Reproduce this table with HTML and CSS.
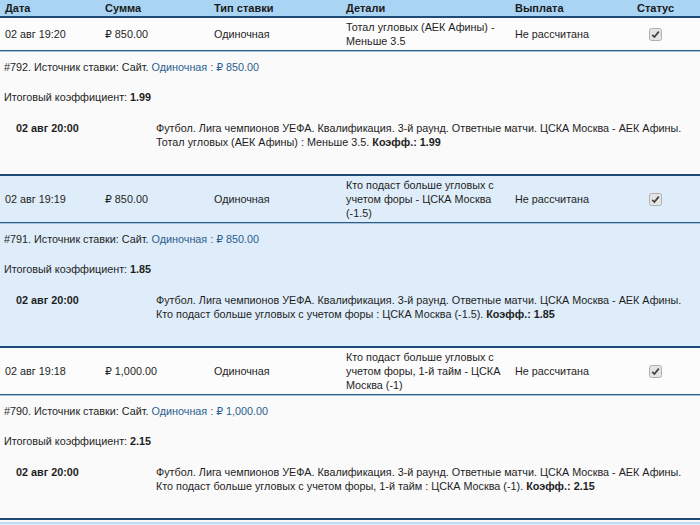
FILE: index.html
```html
<!DOCTYPE html>
<html lang="ru">
<head>
<meta charset="utf-8">
<title>Ставки</title>
<link rel="stylesheet" href="styles.css">
</head>
<body>
<div class="table">
  <div class="head">
    <div>Дата</div><div>Сумма</div><div>Тип ставки</div><div>Детали</div><div>Выплата</div><div>Статус</div>
  </div>

  <div class="bet">
    <div class="row">
      <div>02 авг 19:20</div>
      <div>₽ 850.00</div>
      <div>Одиночная</div>
      <div class="det">Тотал угловых (АЕК Афины) - Меньше 3.5</div>
      <div>Не рассчитана</div>
      <div class="st"><svg class="cb" width="13" height="13" viewBox="0 0 13 13"><rect x="0.5" y="0.5" width="12" height="12" rx="2" fill="#e4e4e4" stroke="#b0b0b0"/><path d="M3.2 6.8 L5.4 9 L9.8 3.6" fill="none" stroke="#404040" stroke-width="1.7"/></svg></div>
    </div>
    <div class="details">
      <p class="src">#792. Источник ставки: Сайт. <span class="link">Одиночная : ₽ 850.00</span></p>
      <p class="total">Итоговый коэффициент: <b>1.99</b></p>
      <div class="event">
        <div class="edate">02 авг 20:00</div>
        <div class="etext">Футбол. Лига чемпионов УЕФА. Квалификация. 3-й раунд. Ответные матчи. ЦСКА Москва - АЕК Афины.<br>Тотал угловых (АЕК Афины) : Меньше 3.5. <b>Коэфф.: 1.99</b></div>
      </div>
    </div>
  </div>

  <div class="bet alt">
    <div class="row">
      <div>02 авг 19:19</div>
      <div>₽ 850.00</div>
      <div>Одиночная</div>
      <div class="det">Кто подаст больше угловых с учетом форы - ЦСКА Москва (-1.5)</div>
      <div>Не рассчитана</div>
      <div class="st"><svg class="cb" width="13" height="13" viewBox="0 0 13 13"><rect x="0.5" y="0.5" width="12" height="12" rx="2" fill="#e4e4e4" stroke="#b0b0b0"/><path d="M3.2 6.8 L5.4 9 L9.8 3.6" fill="none" stroke="#404040" stroke-width="1.7"/></svg></div>
    </div>
    <div class="details">
      <p class="src">#791. Источник ставки: Сайт. <span class="link">Одиночная : ₽ 850.00</span></p>
      <p class="total">Итоговый коэффициент: <b>1.85</b></p>
      <div class="event">
        <div class="edate">02 авг 20:00</div>
        <div class="etext">Футбол. Лига чемпионов УЕФА. Квалификация. 3-й раунд. Ответные матчи. ЦСКА Москва - АЕК Афины.<br>Кто подаст больше угловых с учетом форы : ЦСКА Москва (-1.5). <b>Коэфф.: 1.85</b></div>
      </div>
    </div>
  </div>

  <div class="bet">
    <div class="row">
      <div>02 авг 19:18</div>
      <div>₽ 1,000.00</div>
      <div>Одиночная</div>
      <div class="det">Кто подаст больше угловых с учетом форы, 1-й тайм - ЦСКА Москва (-1)</div>
      <div>Не рассчитана</div>
      <div class="st"><svg class="cb" width="13" height="13" viewBox="0 0 13 13"><rect x="0.5" y="0.5" width="12" height="12" rx="2" fill="#e4e4e4" stroke="#b0b0b0"/><path d="M3.2 6.8 L5.4 9 L9.8 3.6" fill="none" stroke="#404040" stroke-width="1.7"/></svg></div>
    </div>
    <div class="details">
      <p class="src">#790. Источник ставки: Сайт. <span class="link">Одиночная : ₽ 1,000.00</span></p>
      <p class="total">Итоговый коэффициент: <b>2.15</b></p>
      <div class="event">
        <div class="edate">02 авг 20:00</div>
        <div class="etext">Футбол. Лига чемпионов УЕФА. Квалификация. 3-й раунд. Ответные матчи. ЦСКА Москва - АЕК Афины.<br>Кто подаст больше угловых с учетом форы, 1-й тайм : ЦСКА Москва (-1). <b>Коэфф.: 2.15</b></div>
      </div>
    </div>
  </div>

  <div class="bet alt">
    <div class="row next"></div>
  </div>
</div>
</body>
</html>
```

FILE: styles.css
```css
html, body {
  margin: 0;
  padding: 0;
  background: #fafafa;
}
body {
  font-family: "Liberation Sans", Arial, "DejaVu Sans", sans-serif;
  font-size: 10.8px;
  line-height: 14px;
  color: #1e1e1e;
}
.table {
  width: 700px;
  overflow: hidden;
}
.head, .row {
  display: grid;
  grid-template-columns: 100px 109px 132px 169px 122px 1fr;
  padding-left: 5px;
  align-items: center;
}
.head {
  background: #a9d4f4;
  font-weight: bold;
  font-size: 11px;
  padding-top: 1px;
  padding-bottom: 1px;
  border-bottom: 2px solid #1d4a78;
  color: #1a1a1a;
}
.row {
  padding-top: 2px;
  padding-bottom: 2px;
  background: #fcfcfc;
  border-bottom: 1px solid #2d5d8d;
}
.det {
  padding-right: 6px;
}
.st {
  display: flex;
}
.cb {
  display: block;
  margin-left: 12px;
}
.bet {
  border-bottom: 2px solid #1d4a78;
  background: #fafafa;
}
.bet.alt, .bet.alt .row {
  background: #deedf9;
}
.details {
  border-top: 1px solid #a7c1da;
  padding: 8px 0 25px 4px;
}
.details p {
  margin: 0;
}
.src {
  margin-bottom: 16px !important;
}
.total {
  margin-bottom: 17px !important;
}
.link {
  color: #2b5d90;
}
.event {
  display: grid;
  grid-template-columns: 140px 1fr;
  padding-left: 12px;
}
.edate {
  font-weight: bold;
}
.next {
  height: 20px;
  border-bottom: none;
  border-top: 2px solid #c4dcef;
  margin-top: 2px;
}
```
